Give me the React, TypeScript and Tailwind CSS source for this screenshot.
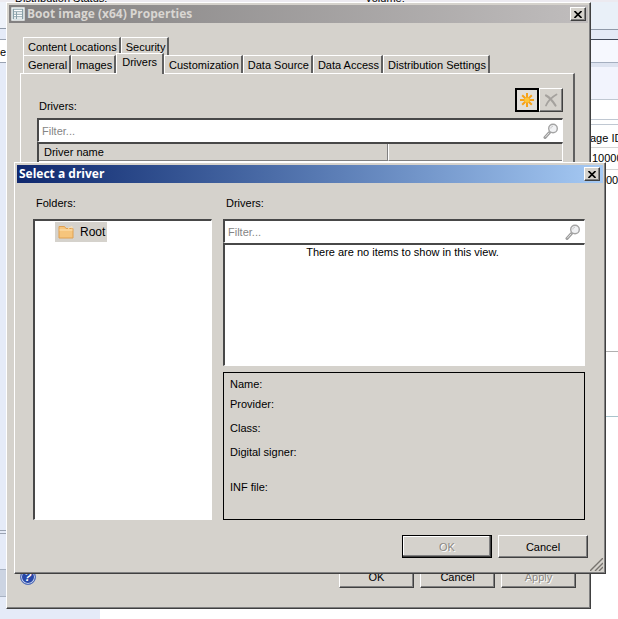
import type { ReactNode } from 'react'

const RAISED =
  'border border-t-white border-l-white border-r-[#404040] border-b-[#404040] shadow-[inset_-1px_-1px_0_#808080]'
const SUNKEN =
  'border-t-2 border-l-2 border-r border-b border-t-[#484848] border-l-[#484848] border-r-white border-b-white'

interface TabProps {
  label: string
  active?: boolean
}

function Tab({ label, active = false }: TabProps) {
  return (
    <button
      type="button"
      role="tab"
      aria-selected={active}
      className={
        active
          ? 'z-10 -mt-0.5 -mb-px whitespace-nowrap border-t border-l border-r-2 border-t-white border-l-white border-r-[#606060] bg-[#d5d2cc] px-[5px] pb-1'
          : 'whitespace-nowrap border-t border-l border-r-2 border-t-white border-l-white border-r-[#606060] pr-0.5 pl-1'
      }
    >
      {label}
    </button>
  )
}

function CloseButton() {
  return (
    <button
      type="button"
      aria-label="Close"
      className={`flex h-3.5 w-4 items-center justify-center bg-[#d5d2cc] ${RAISED}`}
    >
      <svg viewBox="0 0 8 7" className="h-[7px] w-2" stroke="#000" strokeWidth="1.6">
        <path d="M.5 0 7.5 7M7.5 0 .5 7" />
      </svg>
    </button>
  )
}

interface PushButtonProps {
  children: ReactNode
  className: string
  disabled?: boolean
}

function PushButton({ children, className, disabled = false }: PushButtonProps) {
  return (
    <button
      type="button"
      disabled={disabled}
      className={`h-[23px] disabled:text-[#8c8984] disabled:[text-shadow:1px_1px_0_#fff] ${className}`}
    >
      {children}
    </button>
  )
}

function FilterBox({ label }: { label: string }) {
  return (
    <div className={`flex h-6 items-center bg-white pr-[3px] pl-[3px] ${SUNKEN}`}>
      <input
        type="text"
        aria-label={label}
        placeholder="Filter..."
        className="min-w-0 flex-1 outline-none placeholder:text-[#858585]"
      />
      <svg viewBox="0 0 16 16" className="size-4" fill="none">
        <path d="M6.5 9.5 2 14.5" stroke="#9c9c9c" strokeWidth="3" strokeLinecap="round" />
        <path d="M6.2 9.8 2.2 14.2" stroke="#e4e4e4" strokeWidth="1" />
        <circle cx="10" cy="5.5" r="4.3" fill="#f1f2f4" stroke="#a4a4a4" strokeWidth="1.4" />
        <path d="M7.8 5.5c0-1.3.9-2.2 2.2-2.2" stroke="#c4c4c4" />
      </svg>
    </div>
  )
}

function PropertiesWindow() {
  return (
    <section className={`absolute top-0.5 right-[27px] bottom-2.5 left-1.5 flex flex-col bg-[#d5d2cc] p-0.5 ${RAISED}`}>
      <header className="flex h-[18px] shrink-0 items-center gap-0.5 bg-linear-to-r from-[#828080] to-[#c0bdbd] pr-0.5 pl-0.5">
        <svg viewBox="0 0 14 14" className="size-3.5">
          <path d="M1 1h12v12H1z" fill="#8aa0a8" stroke="#f4f8f8" strokeWidth="1.4" />
          <path d="M3 3.5h8M3 6h2M6 6h5M3 8.5h2M6 8.5h5M3 11h2M6 11h5" stroke="#fff" strokeWidth="1.3" />
        </svg>
        <h1 className="flex-1 font-[Open_Sans,sans-serif] text-xs font-bold text-[#d9d6d2]">
          Boot image (x64) Properties
        </h1>
        <CloseButton />
      </header>
      <div className="flex min-h-0 flex-1 flex-col pt-3.5 pr-[13px] pl-[11px]">
        <div role="tablist" className="flex flex-col px-[3px]">
          <div className="flex h-[18px]">
            <Tab label="Content Locations" />
            <Tab label="Security" />
          </div>
          <div className="flex h-[18px]">
            <Tab label="General" />
            <Tab label="Images" />
            <Tab label="Drivers" active />
            <Tab label="Customization" />
            <Tab label="Data Source" />
            <Tab label="Data Access" />
            <Tab label="Distribution Settings" />
          </div>
        </div>
        <div className="flex-1 border-t border-r-2 border-l border-t-white border-r-[#606060] border-l-white pt-3 pr-2.5 pl-4">
          <div className="flex items-center">
            <span className="flex-1 pt-3 pl-0.5">Drivers:</span>
            <button
              type="button"
              aria-label="Add driver"
              className="flex size-6 items-center justify-center border-2 border-black bg-[#e2dfda]"
            >
              <svg viewBox="0 0 16 16" className="size-4" stroke="#f5a21a" strokeWidth="2">
                <path d="M8 1v14M1 8h14M3.2 3.2l9.6 9.6M12.8 3.2l-9.6 9.6" />
                <circle cx="8" cy="8" r="2.6" fill="#ffc63a" stroke="none" />
              </svg>
            </button>
            <button
              type="button"
              aria-label="Remove driver"
              disabled
              className={`flex size-6 items-center justify-center ${RAISED}`}
            >
              <svg viewBox="0 0 16 16" className="size-4" stroke="#a5a29e" fill="none" strokeLinecap="round">
                <path d="M3 3.5c3 1.5 7 6 9.5 10" strokeWidth="2.2" />
                <path d="M13.5 2.5C9 5 5 9 3 13.5" strokeWidth="1.8" />
              </svg>
            </button>
          </div>
          <div className="mt-1 flex flex-col">
            <FilterBox label="Filter drivers" />
            <table className={`w-full border-separate border-spacing-0 bg-[#d5d2cc] text-left ${SUNKEN}`}>
              <thead>
                <tr className="h-4">
                  <th className="w-2/3 border-r border-b border-[#808080] pl-[5px] font-normal leading-4">
                    Driver name
                  </th>
                  <th className="border-b border-l border-b-[#808080] border-l-white" />
                </tr>
              </thead>
              <tbody>
                <tr className="h-4 bg-white">
                  <td colSpan={2} />
                </tr>
              </tbody>
            </table>
          </div>
        </div>
      </div>
      <footer className="flex items-center gap-1.5 pt-2 pr-3 pb-[18px] pl-[11px]">
        <button
          type="button"
          aria-label="Help"
          className="flex size-4 items-center justify-center rounded-full border border-[#5570b8] bg-[#2848a8] text-xs font-bold text-white italic ring-1 ring-[#c6d2ee] ring-inset"
        >
          ?
        </button>
        <span className="flex-1" />
        <PushButton className={`w-[75px] ${RAISED}`}>OK</PushButton>
        <PushButton className={`w-[75px] ${RAISED}`}>Cancel</PushButton>
        <PushButton className={`w-[75px] ${RAISED}`} disabled>
          Apply
        </PushButton>
      </footer>
    </section>
  )
}

function SelectDriverDialog() {
  return (
    <section
      role="dialog"
      aria-label="Select a driver"
      className={`absolute top-[162px] right-3 bottom-[45px] left-3.5 flex flex-col bg-[#d5d2cc] p-0.5 ${RAISED}`}
    >
      <header className="flex h-[18px] shrink-0 items-center bg-linear-to-r from-[#10286e] to-[#a6caf4] pr-[3px] pl-0.5">
        <h2 className="flex-1 font-[Open_Sans,sans-serif] text-xs font-bold text-white">Select a driver</h2>
        <CloseButton />
      </header>
      <div className="flex min-h-0 flex-1 gap-[11px] pt-2.5 pr-[18px] pl-4">
        <div className="flex w-[179px] flex-col">
          <span className="h-[26px] pl-[3px] leading-5">Folders:</span>
          <ul role="tree" className={`flex-1 bg-white pt-px pl-5 ${SUNKEN}`}>
            <li role="treeitem" className="flex h-5 w-[52px] items-center gap-1.5 bg-[#d5d2cc] pl-[3px] text-xs">
              <svg viewBox="0 0 16 14" className="h-3.5 w-4">
                <path d="M1 1.5h5.5l1.5 2h7v9.5H1z" fill="#f6c57c" stroke="#e0a050" />
                <path d="M1.5 5h13M10 3.5l4-2v2" stroke="#fde3b4" fill="none" />
              </svg>
              Root
            </li>
          </ul>
        </div>
        <div className="flex min-w-0 flex-1 flex-col">
          <span className="h-[26px] pl-[3px] leading-5">Drivers:</span>
          <FilterBox label="Filter available drivers" />
          <div className={`flex-1 bg-white pr-1 text-center leading-[14px] ${SUNKEN}`}>
            There are no items to show in this view.
          </div>
          <dl className="mt-1.5 flex h-[148px] flex-col border border-black px-1.5 pt-px leading-5">
            <dt>Name:</dt>
            <dt className="mb-1">Provider:</dt>
            <dt className="mb-1">Class:</dt>
            <dt className="mb-[15px]">Digital signer:</dt>
            <dt>INF file:</dt>
          </dl>
        </div>
      </div>
      <footer className="relative flex justify-end gap-1.5 pt-[15px] pr-[15px] pb-[13px]">
        <PushButton
          className="w-[90px] border border-black shadow-[inset_-1px_-1px_0_#404040,inset_-2px_-2px_0_#808080,inset_1px_1px_0_#fff]"
          disabled
        >
          OK
        </PushButton>
        <PushButton className={`w-[90px] ${RAISED}`}>Cancel</PushButton>
        <svg viewBox="0 0 13 13" className="absolute right-0 bottom-0 size-[13px]" stroke="#77746f" strokeWidth="1.4">
          <path d="M0 13 13 0M5 13l8-8M9 13l4-4" />
        </svg>
      </footer>
    </section>
  )
}

function ConsoleBackdrop() {
  return (
    <div className="flex min-h-screen flex-col">
      <div className="flex h-0.5 items-end overflow-hidden bg-[#eceaf0] leading-2">
        <span className="w-[365px] pl-[15px]">Distribution Status:</span>
        <span>Volume:</span>
      </div>
      <div className="flex flex-1 justify-between">
        <div className="flex w-[100px] flex-col bg-[#e5ebf8]">
          <div className="h-[27px] border-b border-[#8f99a8] bg-[#eef2fa]" />
          <div className="mt-2.5 h-6 border-y border-[#9aa3b2] bg-white leading-6">e</div>
          <div className="flex-1" />
          <div className="h-1 border-y border-[#9aa3b2]" />
          <div className="h-[35px]" />
          <div className="h-7 border-y border-[#a8b2c2] bg-[#ccd4e2]" />
          <div className="h-[22px]" />
        </div>
        <div className="flex w-[34px] flex-col bg-white">
          <div className="h-7 border-b border-[#8f99a8] bg-[#e9f0f8]" />
          <div className="h-[9px] bg-[#e4eaf6]" />
          <div className="h-6 border-y border-t-[#404858] border-b-[#a5afc0] bg-[#f6f8fe]" />
          <div className="h-1 bg-[#dde3f0]" />
          <div className="h-8 bg-[#f2f4fd]" />
          <div className="h-[21px] border-y border-[#c0c8d2]" />
          <div className="mt-1 h-[148px] border-t border-[#c0c8d2] pt-0.5 whitespace-nowrap">
            <div className="h-[21px] border-b border-[#d5d5d5] pt-[3px] pl-1.5">age ID</div>
            <div className="h-[22px] border-b border-[#d5d5d5] pt-0.5 pl-2">10000</div>
            <div className="pt-0.5 pl-[22px]">000</div>
          </div>
          <div className="mt-[79px] h-[66px] border-y border-t-[#b0b0b0] border-b-[#a9c4cc]" />
        </div>
      </div>
    </div>
  )
}

export default function App() {
  return (
    <main className="relative min-h-screen overflow-hidden bg-white font-[Liberation_Sans,Arial,sans-serif] text-[11px] leading-4 text-black">
      <ConsoleBackdrop />
      <PropertiesWindow />
      <SelectDriverDialog />
    </main>
  )
}
